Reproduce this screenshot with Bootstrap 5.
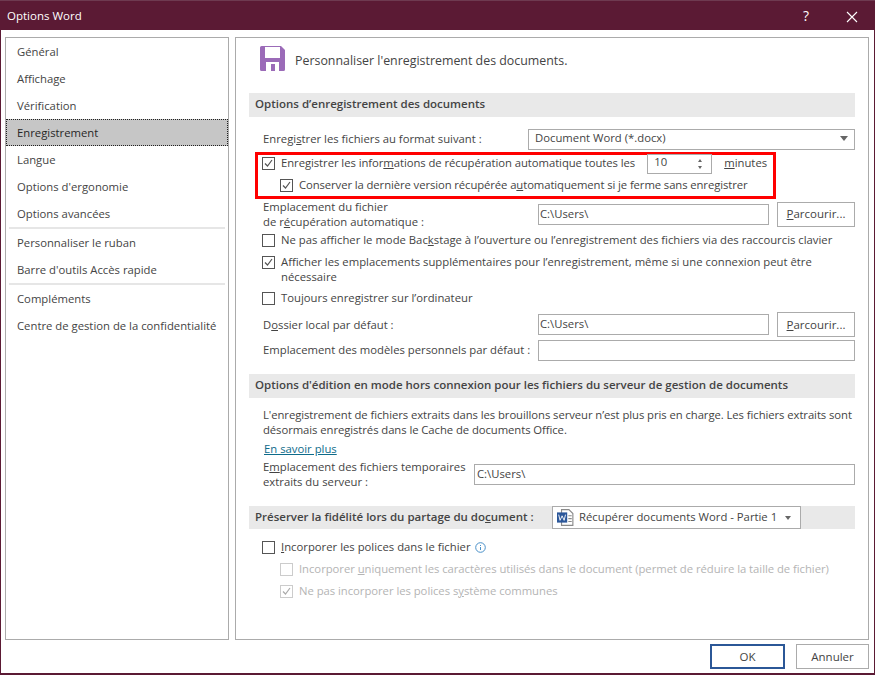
<!DOCTYPE html>
<html lang="fr">
<head>
<meta charset="utf-8">
<title>Options Word</title>
<link href="https://cdn.jsdelivr.net/npm/bootstrap@5.3.0/dist/css/bootstrap.min.css" rel="stylesheet">
<style>
html,body{margin:0;width:875px;height:675px;overflow:hidden}
body{font-family:"Open Sans","Noto Sans",sans-serif;font-size:11.3px;line-height:15px;color:#444;background:#fff}
.win{width:875px;height:675px;border:1px solid #5b1a34;border-top:0;border-bottom:2px solid #5b1a34;display:flex;flex-direction:column;background:#fff}
.tbar{height:30px;flex:none;background:#5b1a34;color:#fff;font-size:11.5px;padding:0 0 0 7px;border-top:1px solid #6e3a50;margin:0 -1px}
.tbtn{width:46px;text-align:center;font-size:14px}
.panes{height:610px;flex:none;padding:7px 6px 0 4px;gap:6px}
.side{width:224px;flex:none;border:1px solid #ababab}
.mitem{height:27px;line-height:27px;padding-left:11px;font-size:11.3px;color:#444}
.mitem.sel{background:#c6c6c6;outline:1px dotted #222;outline-offset:-1px;color:#262626}
.sep{height:2px;background:#e6e6e6;margin:0 3px}
.mainp{width:634px;flex:none;border:1px solid #ababab;padding:0 13px}
.hdrrow{height:55px;padding:8px 0 0 11px;gap:10px;font-size:12.4px;align-items:flex-start}
.hdrrow span{margin-top:7px}
.sect{height:24px;background:#e9e9e9;font-weight:600;color:#444;padding:0 0 4px 6px;font-size:11.5px}
.lbl{padding-left:14px}
.rw{display:flex;align-items:center}
.rw>span:not(.cb){padding-bottom:2px}
.rw>span.keep{padding-bottom:0}
.ctl{border:1px solid #ababab;background:#fff;height:21px;padding:0 6px 2px;color:#444;font-size:11.3px}
.brw{width:78px;height:25px;border:1px solid #ababab;background:#fff;padding:0;border-radius:0;font-size:11.5px;color:#444;flex:none;line-height:22px}
.redbox{border:3px solid #f00;height:47px;margin:2px 0 0 6px;width:521px;box-sizing:border-box;padding-left:4px}
.cb{width:13px;height:13px;border:1px solid #555;background:#fff;flex:none;margin-right:6px;display:block}
.cb.dim{border-color:#ccc}
.cb svg{display:block}
.arr{width:0;height:0;border-left:4px solid transparent;border-right:4px solid transparent;border-top:5px solid #666;flex:none;padding:0!important}
.faint{color:#b4b4b4;letter-spacing:-.04px}
.lnk{color:#0e6b8a;text-decoration:underline}
.spin{width:65px;height:20px;margin-left:12px;padding-left:6px;flex:none}
.spin i{display:block;width:0;height:0;border-left:2.5px solid transparent;border-right:2.5px solid transparent}
.spin .u{border-bottom:3px solid #666;margin-bottom:4px}
.spin .d{border-top:3px solid #666}
.foot{height:33px;flex:none;padding:4px 5px 0 0;gap:11px}
.dbtn{height:25px;border:1px solid #ababab;background:#fff;border-radius:0;color:#444;font-size:11.5px;padding:0;width:73px}
.dbtn.def{border:2px solid #2b5797;width:75px}
.lw{width:275px;flex:none}
.tight1{letter-spacing:-.06px}
.tight2{letter-spacing:-.095px}
.tight3{letter-spacing:-.07px}
.ckrow{height:20px;padding-left:13px}
</style>
</head>
<body>
<div class="win">
  <div class="tbar d-flex align-items-center justify-content-between">
    <span>Options Word</span>
    <div class="d-flex">
      <span class="tbtn">?</span>
      <span class="tbtn"><svg width="12" height="12" viewBox="0 0 12 12"><path d="M1 1l10 10M11 1L1 11" stroke="#fff" stroke-width="1.1" fill="none"/></svg></span>
    </div>
  </div>
  <div class="panes d-flex">
    <div class="side">
      <div class="mitem">Général</div>
      <div class="mitem">Affichage</div>
      <div class="mitem">Vérification</div>
      <div class="mitem sel">Enregistrement</div>
      <div class="mitem">Langue</div>
      <div class="mitem">Options d'ergonomie</div>
      <div class="mitem">Options avancées</div>
      <div class="sep"></div>
      <div class="mitem">Personnaliser le ruban</div>
      <div class="mitem">Barre d'outils Accès rapide</div>
      <div class="sep"></div>
      <div class="mitem">Compléments</div>
      <div class="mitem">Centre de gestion de la confidentialité</div>
    </div>
    <div class="mainp">
      <div class="hdrrow d-flex">
        <svg width="25" height="25" viewBox="0 0 25 25"><path fill="#9b6bb8" d="M0 1.5A1.5 1.5 0 0 1 1.500 0H21l4 4v19.500a1.500 1.500 0 0 1-1.500 1.500h-22A1.500 1.500 0 0 1 0 23.500z"/><rect x="5" y="1" width="15" height="11" fill="#fff"/><rect x="6" y="16" width="13" height="9" fill="#fff"/><rect x="11" y="18" width="4" height="7" fill="#9b6bb8"/></svg>
        <span>Personnaliser l'enregistrement des documents.</span>
      </div>
      <div class="sect rw">Options d’enregistrement des documents</div>

      <div class="rw lbl justify-content-between" style="margin-top:12px;height:21px">
        <span>Enregi<u>s</u>trer les fichiers au format suivant :</span>
        <div class="ctl rw justify-content-between" style="width:327px;padding-right:6px"><span>Document Word (*.docx)</span><span class="arr"></span></div>
      </div>

      <div class="redbox d-flex flex-column">
        <div class="rw" style="height:17px">
          <span class="cb"><svg width="11" height="11" viewBox="0 0 11 11"><path d="M2 5.500l2.500 2.500 4.500-6" stroke="#555" stroke-width="1.200" fill="none"/></svg></span>
          <span class="text-nowrap tight1">Enregistrer les infor<u>m</u>ations de récupération automatique toutes les</span>
          <div class="ctl spin rw justify-content-between"><span>10</span><div class="d-flex flex-column align-items-center" style="margin:2px 3px 0 0"><i class="u"></i><i class="d"></i></div></div>
          <span class="ms-2 ps-1"><u>m</u>inutes</span>
        </div>
        <div class="rw" style="height:17px;padding-left:18px;margin-top:5px">
          <span class="cb"><svg width="11" height="11" viewBox="0 0 11 11"><path d="M2 5.500l2.500 2.500 4.500-6" stroke="#555" stroke-width="1.200" fill="none"/></svg></span>
          <span class="tight2">Conserver la dernière version récupérée a<u>u</u>tomatiquement si je ferme sans enregistrer</span>
        </div>
      </div>

      <div class="rw lbl" style="height:30px">
        <span class="lw keep">Emplacement du fichier<br>de r<u>é</u>cupération automatique :</span>
        <div class="ctl rw" style="width:231px;padding:0 2px 2px 1px">C:\Users\</div>
        <button class="brw btn ms-auto"><u>P</u>arcourir...</button>
      </div>

      <div class="rw ckrow" style="margin-top:1px">
        <span class="cb"></span>
        <span>Ne pas afficher le mode Bac<u>k</u>stage à l’ouverture ou l’enregistrement des fichiers via des raccourcis clavier</span>
      </div>
      <div class="d-flex" style="padding-left:13px;margin-top:4px">
        <span class="cb" style="margin-top:2px"><svg width="11" height="11" viewBox="0 0 11 11"><path d="M2 5.500l2.500 2.500 4.500-6" stroke="#555" stroke-width="1.200" fill="none"/></svg></span>
        <span>Afficher les emplacements supplémentaires pour l’enregistrement, même si une connexion peut être nécessaire</span>
      </div>
      <div class="rw ckrow" style="margin-top:4px">
        <span class="cb"></span>
        <span>Toujours enregistrer sur l’ordinateur</span>
      </div>

      <div class="rw lbl" style="height:25px;margin-top:4px">
        <span class="lw keep">D<u>o</u>ssier local par défaut :</span>
        <div class="ctl rw" style="width:231px;padding:0 2px 2px 1px">C:\Users\</div>
        <button class="brw btn ms-auto"><u>P</u>arcourir...</button>
      </div>
      <div class="rw lbl" style="height:21px;margin-top:3px">
        <span class="lw">Emplacement des modèles personnels par défaut :</span>
        <div class="ctl flex-grow-1"></div>
      </div>

      <div class="sect rw" style="margin-top:13px">Options d'édition en mode hors connexion pour les fichiers du serveur de gestion de documents</div>
      <div class="lbl tight3" style="margin-top:9px">L'enregistrement de fichiers extraits dans les brouillons serveur n’est plus pris en charge. Les fichiers extraits sont désormais enregistrés dans le Cache de documents Office.</div>
      <div class="lbl" style="margin-top:4px;padding-left:15px"><span class="lnk">En savoir plus</span></div>
      <div class="rw lbl" style="margin-top:3px;height:30px">
        <span class="keep" style="width:211px;flex:none">E<u>m</u>placement des fichiers temporaires<br>extraits du serveur :</span>
        <div class="ctl rw flex-grow-1" style="padding:0 2px 2px">C:\Users\</div>
      </div>

      <div class="sect rw" style="margin-top:17px;height:23px;padding-bottom:2px">
        <span class="keep" style="width:297px;flex:none">Préserver la fidélité lors du partage du do<u>c</u>ument :</span>
        <div class="ctl rw" style="width:249px;height:23px;padding:0 9px 0 4px;font-weight:400;margin-bottom:-2px">
          <svg class="flex-shrink-0" style="margin-right:5px" width="17" height="17" viewBox="0 0 15 15"><path d="M4 .5h6.500l3.500 3.500v10.500H4z" fill="#fff" stroke="#8a8a8a"/><path d="M10 6h3M10 8.500h3M10 11h3" stroke="#8a8a8a"/><rect x="0" y="3" width="9" height="9" fill="#2b579a"/><path d="M1.500 5l1.200 5 1.800-4 1.800 4 1.200-5" stroke="#fff" stroke-width=".8" fill="none"/></svg>
          <span>Récupérer documents Word - Partie 1</span><span class="arr ms-auto" style="border-left-width:3.5px;border-right-width:3.500px;border-top-width:4px"></span>
        </div>
      </div>
      <div class="rw" style="height:22px;padding-left:13px;margin-top:7px">
        <span class="cb"></span>
        <span><u>I</u>ncorporer les polices dans le fichier</span>
        <svg class="ms-1" width="11" height="11" viewBox="0 0 11 11"><circle cx="5.500" cy="5.500" r="4.800" fill="none" stroke="#4a90c8"/><path d="M5.500 3v1M5.500 5v3" stroke="#4a90c8"/></svg>
      </div>
      <div class="rw faint" style="height:22px;padding-left:31px">
        <span class="cb dim"></span>
        <span>Incorporer <u>u</u>niquement les caractères utilisés dans le document (permet de réduire la taille de fichier)</span>
      </div>
      <div class="rw faint" style="height:22px;padding-left:31px">
        <span class="cb dim"><svg width="11" height="11" viewBox="0 0 11 11"><path d="M2 5.500l2.500 2.500 4.500-6" stroke="#aaa" stroke-width="1.200" fill="none"/></svg></span>
        <span>Ne pas incorporer les polices s<u>y</u>stème communes</span>
      </div>
    </div>
  </div>
  <div class="foot d-flex justify-content-end">
    <button class="btn dbtn def">OK</button>
    <button class="btn dbtn">Annuler</button>
  </div>
</div>
</body>
</html>
